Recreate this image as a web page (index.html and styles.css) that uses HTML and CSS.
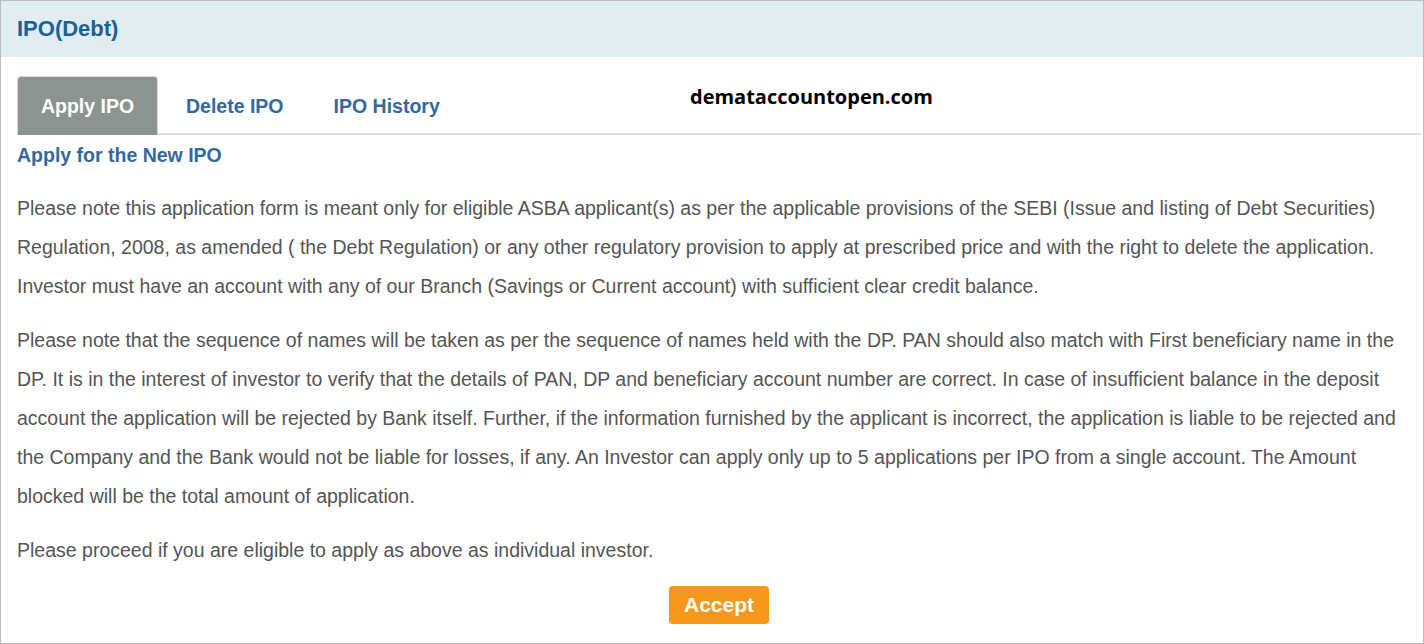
FILE: index.html
```html
<!DOCTYPE html>
<html>
<head>
<meta charset="utf-8">
<link rel="stylesheet" href="styles.css">
</head>
<body>
<div class="frame">
  <div class="header"><h1 class="title">IPO(Debt)</h1></div>
  <div class="content">
    <div class="tabs">
      <div class="tab active">Apply IPO</div>
      <div class="tab">Delete IPO</div>
      <div class="tab">IPO History</div>
      <div class="watermark">demataccountopen.com</div>
    </div>
    <h2 class="subtitle">Apply for the New IPO</h2>
    <p class="para">Please note this application form is meant only for eligible ASBA applicant(s) as per the applicable provisions of the SEBI (Issue and listing of Debt Securities) Regulation, 2008, as amended ( the Debt Regulation) or any other regulatory provision to apply at prescribed price and with the right to delete the application. Investor must have an account with any of our Branch (Savings or Current account) with sufficient clear credit balance.</p>
    <p class="para">Please note that the sequence of names will be taken as per the sequence of names held with the DP. PAN should also match with First beneficiary name in the DP. It is in the interest of investor to verify that the details of PAN, DP and beneficiary account number are correct. In case of insufficient balance in the deposit account the application will be rejected by Bank itself. Further, if the information furnished by the applicant is incorrect, the application is liable to be rejected and the Company and the Bank would not be liable for losses, if any. An Investor can apply only up to 5 applications per IPO from a single account. The Amount blocked will be the total amount of application.</p>
    <p class="para">Please proceed if you are eligible to apply as above as individual investor.</p>
    <div class="actions"><button class="btn">Accept</button></div>
  </div>
</div>
</body>
</html>
```
FILE: styles.css
```css
html, body {
  margin: 0;
  padding: 0;
  background: #fff;
}
.frame {
  box-sizing: border-box;
  width: 1424px;
  height: 644px;
  border: 1px solid #bdbdbd;
  font-family: "Liberation Sans", Arial, sans-serif;
  overflow: hidden;
}
.header {
  height: 56px;
  background: #e0edf2;
  display: flex;
  align-items: center;
  padding-left: 16px;
}
.title {
  margin: 0;
  font-size: 22px;
  font-weight: bold;
  color: #1e5f98;
}
.content {
  padding: 19px 2px 0 16px;
}
.tabs {
  position: relative;
  display: flex;
  gap: 4px;
  height: 59px;
  border-bottom: 2px solid #dddddd;
  box-sizing: border-box;
}
.tab {
  box-sizing: border-box;
  height: 59px;
  padding: 1px 22px 0 24px;
  display: flex;
  align-items: center;
  font-size: 19.5px;
  font-weight: bold;
  color: #33699e;
}
.tab.active {
  background: #8c9490;
  color: #fff;
  border: 1px solid #d6d9d8;
  border-bottom: none;
  border-radius: 4px 4px 0 0;
  width: 141px;
  justify-content: center;
  padding: 1px 0 0;
}
.watermark {
  position: absolute;
  left: 673px;
  top: 7px;
  font-family: "Open Sans", "Noto Sans", sans-serif;
  font-weight: bold;
  font-size: 20px;
  color: #000;
}
.subtitle {
  margin: 8px 0 0;
  font-size: 19.5px;
  line-height: 24px;
  font-weight: bold;
  color: #33699e;
}
.para {
  margin: 15px 0 0;
  font-size: 19.5px;
  line-height: 39px;
  color: #555555;
}
.subtitle + .para {
  margin-top: 22px;
}
.actions {
  display: flex;
  justify-content: center;
  margin-top: 16px;
}
.btn {
  width: 100px;
  height: 38px;
  background: #f7971c;
  border: none;
  border-radius: 4px;
  color: #fff;
  font-family: "Liberation Sans", Arial, sans-serif;
  font-weight: bold;
  font-size: 21px;
  padding: 0;
}
```
